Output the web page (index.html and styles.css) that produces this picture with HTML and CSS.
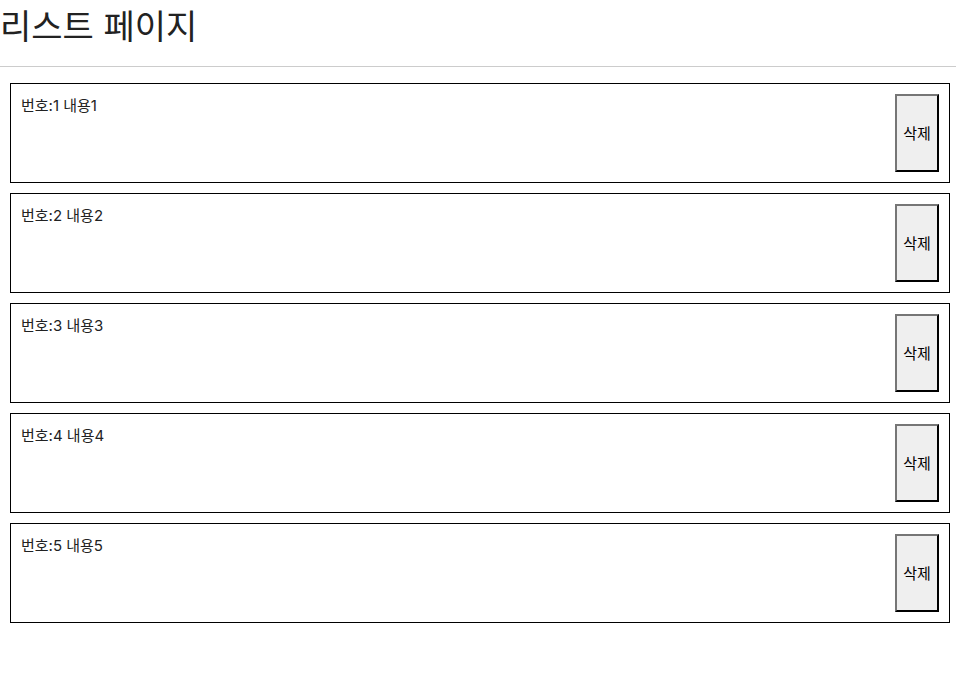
FILE: index.html
```html
<!DOCTYPE html>
<html lang="ko">
<head>
    <meta charset="UTF-8">
    <title>리스트 페이지</title>
    <link rel="stylesheet" href="styles.css">
</head>

<body>
    <div class="header">
        <h1>리스트 페이지</h1>
    </div>
    <ul class="list">
        <li class="item">
            <span class="text">번호:1 내용1</span>
            <button class="del">삭제</button>
        </li>
        <li class="item">
            <span class="text">번호:2 내용2</span>
            <button class="del">삭제</button>
        </li>
        <li class="item">
            <span class="text">번호:3 내용3</span>
            <button class="del">삭제</button>
        </li>
        <li class="item">
            <span class="text">번호:4 내용4</span>
            <button class="del">삭제</button>
        </li>
        <li class="item">
            <span class="text">번호:5 내용5</span>
            <button class="del">삭제</button>
        </li>
    </ul>
</body>
</html>
```

FILE: styles.css
```css
body {
    margin: 0;
    font-family: Inter, "Noto Sans CJK KR", sans-serif;
    color: #222;
    background: #fff;
}

.header {
    border-bottom: 1px solid #ccc;
    height: 66px;
}

h1 {
    margin: 0;
    font-size: 34px;
    font-weight: 400;
    line-height: 54px;
}

.list {
    list-style: none;
    margin: 0;
    padding: 16px 6px 16px 10px;
    display: flex;
    flex-direction: column;
    gap: 10px;
}

.item {
    display: flex;
    justify-content: space-between;
    box-sizing: border-box;
    height: 100px;
    padding: 10px;
    border: 1px solid #000;
    font-size: 15px;
    line-height: 24px;
}

.del {
    width: 44px;
    padding: 0 4px 2px;
    font-family: Inter, "Noto Sans CJK KR", sans-serif;
    font-size: 15px;
    color: #000;
    background-color: #efefef;
    border: 2px outset #767676;
    border-color: #767676 #333 #333 #767676;
}
```
